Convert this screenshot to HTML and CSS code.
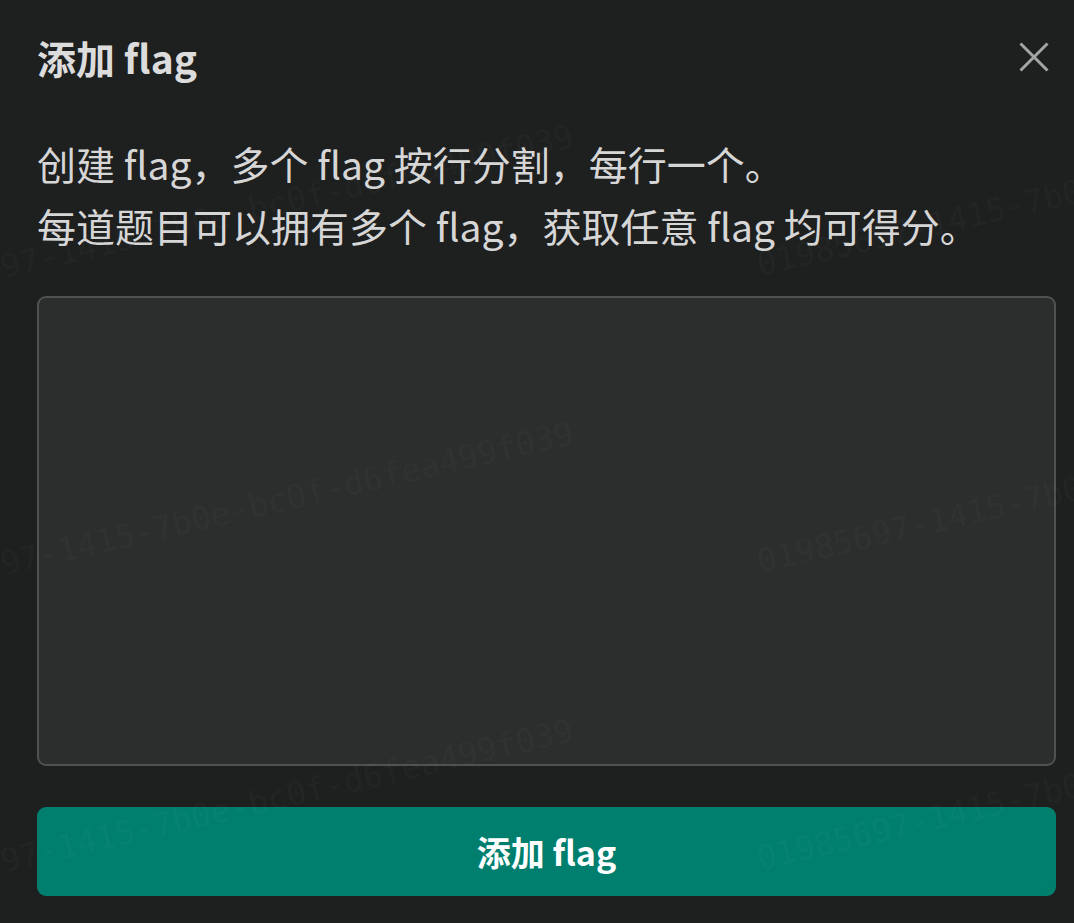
FILE: index.html
```html
<!DOCTYPE html>
<html lang="zh-CN">
<head>
  <meta charset="UTF-8" />
  <title>添加 flag</title>
  <link rel="stylesheet" href="styles.css">
</head>
<body>
  <div class="modal">
    <div class="modal-head">
      <h2 class="modal-title">添加 flag</h2>
      <button class="close" aria-label="关闭">
        <svg width="30" height="30" viewBox="0 0 30 30">
          <path d="M1.5 1.5 L28.5 28.5 M28.5 1.5 L1.5 28.5" stroke="#a3a4a4" stroke-width="3" fill="none" />
        </svg>
      </button>
    </div>

    <p class="desc">创建 flag，多个 flag 按行分割，每行一个。<br>每道题目可以拥有多个 flag，获取任意 flag 均可得分。</p>

    <textarea class="flag-input"></textarea>

    <button class="submit">添加 flag</button>
  </div>

  <!-- watermark -->
  <div class="watermark">
    <span class="wm a1">01985697-1415-7b0e-bc0f-d6fea499f039</span>
    <span class="wm a2">01985697-1415-7b0e-bc0f-d6fea499f039</span>
    <span class="wm a3">01985697-1415-7b0e-bc0f-d6fea499f039</span>
    <span class="wm b1">01985697-1415-7b0e-bc0f-d6fea499f039</span>
    <span class="wm b2">01985697-1415-7b0e-bc0f-d6fea499f039</span>
    <span class="wm b3">01985697-1415-7b0e-bc0f-d6fea499f039</span>
  </div>
</body>
</html>
```

FILE: styles.css
```css
body {
  margin: 0;
  background: #1e1f1f;
  color: #d9d9d9;
  font-family: "Noto Sans CJK SC", sans-serif;
  height: 923px;
  overflow: hidden;
}

.modal {
  display: flex;
  flex-direction: column;
  padding: 29px 18px 27px 37px;
}

.modal-head {
  display: flex;
  justify-content: space-between;
  align-items: center;
  height: 56px;
}

.modal-title {
  margin: 0;
  font-size: 39px;
  line-height: 56px;
  font-weight: 700;
  color: #dcdcdc;
}

.close {
  background: none;
  border: none;
  padding: 0;
  margin-right: 7px;
  width: 30px;
  height: 30px;
  cursor: pointer;
}

.close svg {
  display: block;
}

.desc {
  margin: 47px 0 0;
  font-size: 39px;
  line-height: 62px;
  color: #d6d6d6;
}

.flag-input {
  margin-top: 40px;
  height: 470px;
  width: 100%;
  box-sizing: border-box;
  background: #2c2d2d;
  border: 2px solid #505151;
  border-radius: 9px;
  resize: none;
  color: #d9d9d9;
  font-family: inherit;
  font-size: 32px;
  outline: none;
}

.submit {
  margin-top: 41px;
  height: 89px;
  width: 100%;
  background: #007f6f;
  color: #ffffff;
  border: none;
  border-radius: 9px;
  font-family: inherit;
  font-size: 34px;
  font-weight: 700;
  cursor: pointer;
}

.watermark {
  position: fixed;
  inset: 0;
  overflow: hidden;
  pointer-events: none;
}

.wm {
  position: absolute;
  white-space: nowrap;
  font-family: "DejaVu Sans Mono", monospace;
  font-size: 32.5px;
  line-height: 1;
  color: rgba(255, 255, 255, 0.025);
  transform-origin: 0 27px;
  transform: rotate(-13deg);
}

.a1 { left: -111px; top: 278px; }
.a2 { left: -111px; top: 575px; }
.a3 { left: -111px; top: 872px; }
.b1 { left: 760px; top: 249px; }
.b2 { left: 760px; top: 546px; }
.b3 { left: 760px; top: 843px; }
```
